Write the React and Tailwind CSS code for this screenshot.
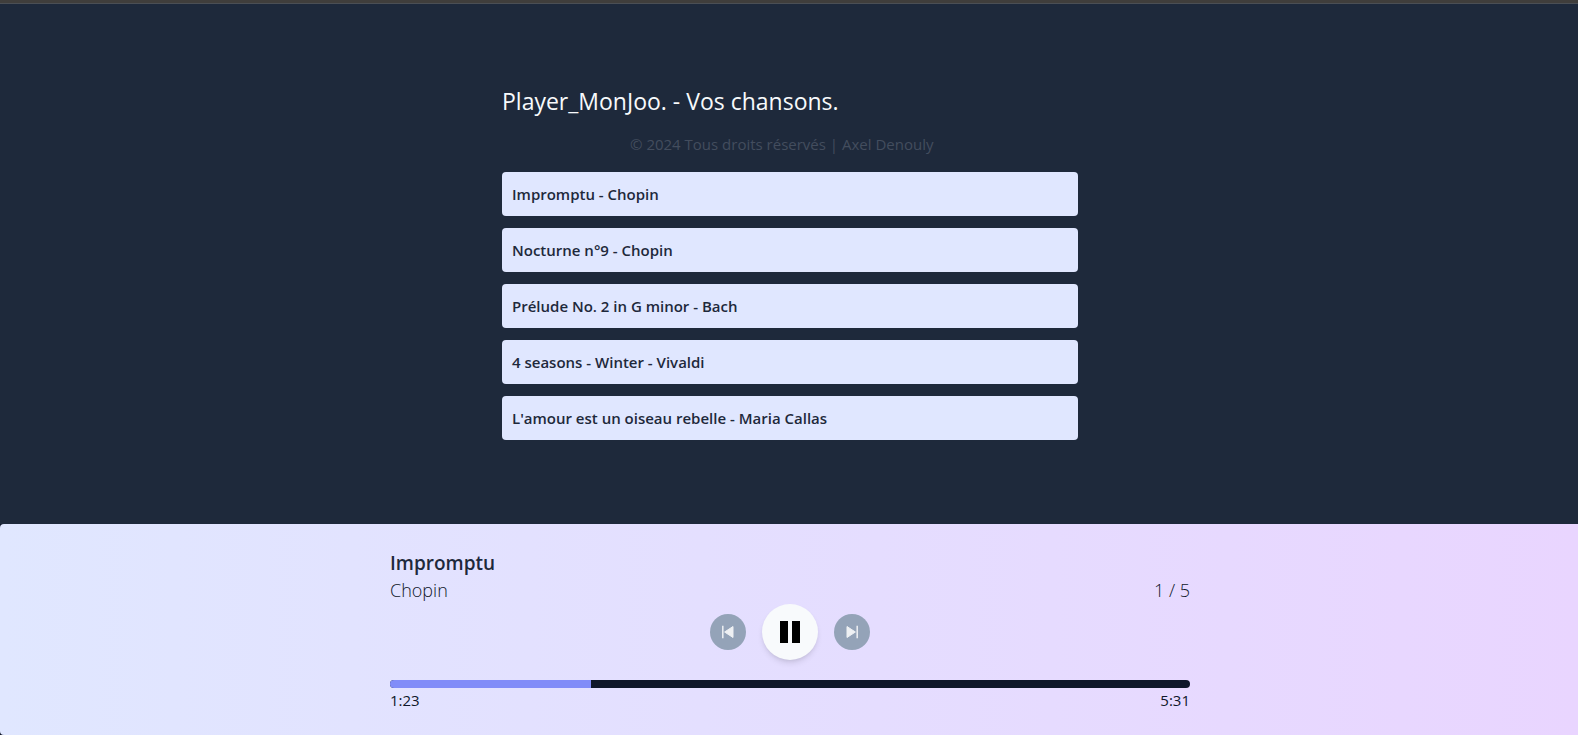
import { useState } from "react";

const songs = [
  "Impromptu - Chopin",
  "Nocturne n°9 - Chopin",
  "Prélude No. 2 in G minor - Bach",
  "4 seasons - Winter - Vivaldi",
  "L'amour est un oiseau rebelle - Maria Callas",
];

function SkipIcon({ flipped }) {
  return (
    <svg viewBox="0 0 14 14" className={flipped ? "size-3.5 -scale-x-100" : "size-3.5"} fill="#eef0f3" stroke="#eef0f3" aria-hidden="true">
      <path d="M1.8 .7v12.6" strokeWidth="1.5" />
      <path d="M12 1.5v11L3.6 7z" strokeWidth="1" strokeLinejoin="round" />
    </svg>
  );
}

export default function App() {
  const [time, setTime] = useState(83);
  const duration = 331;

  return (
    <div className="flex min-h-screen flex-col bg-[#1e293b] font-['Segoe_UI','Open_Sans',sans-serif]">
      <div className="h-1 border-b border-[#4b4f55] bg-[#403e3c]" />
      <main className="flex-1 pt-20 pr-4 pb-6 pl-[18px]">
        <div className="mx-auto max-w-xl">
          <h1 className="text-[23px] leading-[34px] text-slate-50">Player_MonJoo. - Vos chansons.</h1>
          <p className="mt-3.5 ml-32 text-[15px] leading-6 text-[#434d5e]">
            © 2024 Tous droits réservés | Axel Denouly
          </p>
          <ul className="mt-4 flex flex-col gap-3">
            {songs.map((song) => (
              <li key={song}>
                <button
                  type="button"
                  className="block w-full rounded bg-[#e0e7ff] px-2.5 py-2.5 text-left text-[15px] leading-6 font-semibold text-[#1e293b]"
                >
                  {song}
                </button>
              </li>
            ))}
          </ul>
        </div>
      </main>
      <div className="bg-[#0f172a]">
        <footer className="rounded-l bg-[linear-gradient(to_right,#e0e7ff,#e9d5ff)] pt-[25px] pr-4 pb-[23px] pl-[18px]">
          <div className="mx-auto max-w-[800px]">
            <p className="text-[19px] leading-7 font-semibold text-[#1e293b]">Impromptu</p>
            <div className="flex justify-between text-[18px] leading-[27px] text-[#0f172a]">
              <p className="font-light">Chopin</p>
              <p className="font-light">1 / 5</p>
            </div>
            <div className="flex items-center justify-center gap-4">
              <button type="button" aria-label="Précédent" className="flex size-9 items-center justify-center rounded-full bg-[#94a3b8]">
                <SkipIcon />
              </button>
              <button type="button" aria-label="Pause" className="flex size-14 items-center justify-center rounded-full bg-[#f8fafc] shadow-md">
                <svg viewBox="0 0 20 22" className="h-[22px] w-5" aria-hidden="true">
                  <path d="M0 0h8v22H0zM12 0h8v22h-8z" />
                </svg>
              </button>
              <button type="button" aria-label="Suivant" className="flex size-9 items-center justify-center rounded-full bg-[#94a3b8]">
                <SkipIcon flipped />
              </button>
            </div>
            <div className="relative mt-5 h-2 overflow-hidden rounded bg-[#0f172a]">
              <div className="h-full bg-[#818cf8]" style={{ width: `${(time / duration) * 100}%` }} />
              <input
                type="range"
                aria-label="Progression"
                min="0"
                max={duration}
                value={time}
                onChange={(e) => setTime(Number(e.target.value))}
                className="absolute inset-0 h-full w-full cursor-pointer opacity-0"
              />
            </div>
            <div className="flex justify-between text-[15px] leading-6 text-[#0f172a]">
              <span>{Math.floor(time / 60)}:{String(time % 60).padStart(2, "0")}</span>
              <span>5:31</span>
            </div>
          </div>
        </footer>
      </div>
    </div>
  );
}
